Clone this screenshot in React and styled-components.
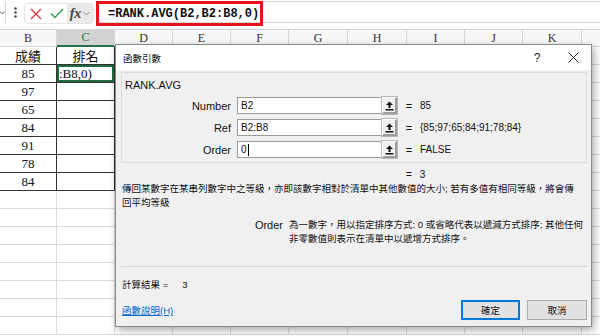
import styled, { createGlobalStyle } from "styled-components";

const GlobalStyle = createGlobalStyle`
  html, body {
    margin: 0;
    padding: 0;
    background: #ffffff;
  }
  * {
    box-sizing: border-box;
  }
`;

const Screen = styled.div`
  position: relative;
  width: 600px;
  height: 336px;
  overflow: hidden;
  background: #ffffff;
  font-family: "Liberation Sans", "Noto Sans CJK TC", sans-serif;
  display: flex;
  flex-direction: column;
`;

/* ---------- formula bar ---------- */

const FormulaBar = styled.div`
  height: 29px;
  flex: none;
  display: flex;
  align-items: flex-start;
  background: #ffffff;
`;

const NameBoxEnd = styled.div`
  width: 6px;
  height: 21px;
  margin-top: 2px;
  border-right: 1px solid #d6d6d6;
  display: flex;
  align-items: center;
`;

const Dots = styled.div`
  width: 18px;
  height: 25px;
  display: flex;
  align-items: center;
  justify-content: center;
`;

const ButtonGroup = styled.div`
  margin-top: 3px;
  height: 21px;
  width: 70px;
  border: 1px solid #e3e3e3;
  border-radius: 4px;
  display: flex;
  align-items: center;
  overflow: hidden;
`;

const IconSlot = styled.div`
  width: 21px;
  height: 100%;
  display: flex;
  align-items: center;
  justify-content: center;
`;

const FxBox = styled.div`
  flex: 1;
  height: 100%;
  background: #e9e9e9;
  display: flex;
  align-items: center;
  justify-content: center;
  gap: 2px;
  font-family: "Liberation Serif", serif;
  font-style: italic;
  font-weight: bold;
  font-size: 14px;
  color: #444;
`;

const FormulaInput = styled.div`
  flex: 1;
  margin-left: 2px;
  margin-top: 1px;
  height: 22px;
  border-top: 1px solid #d6d6d6;
  border-bottom: 1px solid #d6d6d6;
  position: relative;
`;

const Highlight = styled.div`
  position: absolute;
  left: 0;
  top: -1px;
  width: 167px;
  height: 25px;
  border: 3px solid #e8141b;
  display: flex;
  align-items: center;
  padding-left: 9px;
  font-family: "Liberation Mono", monospace;
  font-weight: bold;
  font-size: 12px;
  color: #111;
`;

/* ---------- sheet ---------- */

const columns = [
  { id: "B", w: 57 },
  { id: "C", w: 58 },
  { id: "D", w: 58 },
  { id: "E", w: 58 },
  { id: "F", w: 58 },
  { id: "G", w: 59 },
  { id: "H", w: 59 },
  { id: "I", w: 58 },
  { id: "J", w: 58 },
  { id: "K", w: 59 },
  { id: "L", w: 40 },
];

const Sheet = styled.div`
  flex: 1;
  display: grid;
  grid-template-columns: ${columns.map((c) => c.w + "px").join(" ")};
  grid-auto-rows: 18px;
  grid-template-rows: 17px;
  border-top: 1px solid #d4d4d4;
`;

const HeaderCell = styled.div`
  background: ${(p) => (p.$active ? "#d3d3d3" : "#f8f8f8")};
  border-right: 1px solid #d8d8d8;
  border-bottom: ${(p) => (p.$active ? "2px solid #217346" : "1px solid #d8d8d8")};
  color: ${(p) => (p.$active ? "#217346" : "#333")};
  font-family: "Liberation Serif", serif;
  font-size: 12px;
  display: flex;
  align-items: center;
  justify-content: center;
`;

const Cell = styled.div`
  border-right: 1px solid ${(p) => (p.$table ? "#333" : "#dcdcdc")};
  border-bottom: 1px solid ${(p) => (p.$table ? "#333" : "#dcdcdc")};
  font-family: "Liberation Serif", "Noto Sans CJK TC", serif;
  font-size: 13px;
  color: #111;
  display: flex;
  align-items: center;
  justify-content: ${(p) => (p.$left ? "flex-start" : "center")};
  padding-left: ${(p) => (p.$left ? "2px" : "0")};
  overflow: hidden;
  white-space: nowrap;
  ${(p) => p.$selected && "box-shadow: inset 0 0 0 2px #1e6b40;"}
`;

const sheetRows = [
  ["成績", "排名"],
  ["85", ":B8,0)"],
  ["97", ""],
  ["65", ""],
  ["84", ""],
  ["91", ""],
  ["78", ""],
  ["84", ""],
  ...Array.from({ length: 8 }, () => ["", ""]),
];

/* ---------- dialog ---------- */

const Dialog = styled.div`
  position: absolute;
  left: 115px;
  top: 44px;
  width: 477px;
  height: 283px;
  background: #f0f0f0;
  border: 1px solid #8a8a8a;
  box-shadow: 2px 3px 8px rgba(0, 0, 0, 0.35);
  display: flex;
  flex-direction: column;
`;

const TitleBar = styled.div`
  height: 25px;
  flex: none;
  background: #ffffff;
  display: flex;
  align-items: center;
  padding-left: 7px;
  font-size: 9.5px;
  color: #111;
`;

const TitleText = styled.div`
  flex: 1;
`;

const TitleButton = styled.div`
  width: 36px;
  height: 100%;
  display: flex;
  align-items: center;
  justify-content: center;
  font-size: 12px;
  color: #222;
`;

const Body = styled.div`
  flex: 1;
  padding: 2px 4px 0 5px;
  display: flex;
  flex-direction: column;
`;

const GroupBox = styled.div`
  height: 91px;
  border: 1px solid #dcdcdc;
  padding: 5px 0 0 3px;
  display: flex;
  flex-direction: column;
`;

const GroupTitle = styled.div`
  font-size: 11px;
  line-height: 14px;
  color: #111;
`;

const ArgGrid = styled.div`
  margin-top: 5px;
  display: grid;
  grid-template-columns: 112px 145px 15px 23px 1fr;
  grid-auto-rows: 17px;
  row-gap: 5px;
  align-items: center;
`;

const ArgLabel = styled.div`
  font-size: 11px;
  color: #111;
  text-align: right;
  padding-right: 6px;
`;

const ArgInput = styled.div`
  height: 17px;
  background: #ffffff;
  border: 1px solid #9a9a9a;
  border-right: none;
  font-size: 10px;
  color: #111;
  display: flex;
  align-items: center;
  padding-left: 3px;
`;

const Caret = styled.span`
  display: inline-block;
  width: 1px;
  height: 12px;
  background: #000;
  margin-left: 1px;
`;

const CollapseButton = styled.div`
  height: 17px;
  background: #f0f0f0;
  border: 1px solid #9a9a9a;
  border-top-color: #ffffff;
  border-left-color: #ffffff;
  box-shadow: inset -1px -1px 0 #a0a0a0;
  outline: 1px solid #b8b8b8;
  display: flex;
  align-items: center;
  justify-content: center;
`;

const Equals = styled.div`
  font-size: 11px;
  color: #111;
  text-align: center;
  padding-left: 1px;
`;

const ArgValue = styled.div`
  font-size: 10px;
  color: #111;
  white-space: nowrap;
`;

const ResultLine = styled.div`
  margin-top: 4px;
  height: 14px;
  display: flex;
  align-items: center;
  padding-left: 285px;
  font-size: 10px;
  color: #111;
  gap: 8px;
`;

const Description = styled.div`
  margin-top: 1px;
  padding-left: 1px;
  font-size: 9.5px;
  line-height: 14px;
  color: #111;
  white-space: nowrap;
`;

const ArgHelp = styled.div`
  margin-top: 8px;
  display: flex;
  font-size: 9.5px;
  line-height: 14px;
  color: #111;
`;

const ArgHelpName = styled.div`
  width: 168px;
  text-align: right;
  padding-right: 6px;
  font-size: 11px;
`;

const ArgHelpText = styled.div`
  white-space: nowrap;
`;

const Separator = styled.div`
  margin-top: 20px;
  height: 1px;
  background: #d5d5d5;
`;

const Computed = styled.div`
  margin-top: 10px;
  height: 14px;
  display: flex;
  align-items: center;
  font-size: 9.5px;
  color: #111;
  gap: 14px;
  padding-left: 1px;
`;

const Footer = styled.div`
  margin-top: 9px;
  display: flex;
  align-items: center;
  gap: 7px;
`;

const HelpLink = styled.a`
  flex: 1;
  font-size: 9.5px;
  color: #0066cc;
  text-decoration: underline;
  padding-left: 1px;
`;

const DialogButton = styled.div`
  width: ${(p) => (p.$default ? "59px" : "60px")};
  height: 20px;
  background: #e1e1e1;
  border: ${(p) => (p.$default ? "2px solid #0078d7" : "1px solid #adadad")};
  display: flex;
  align-items: center;
  justify-content: center;
  font-size: 9.5px;
  color: #111;
`;

function CollapseIcon() {
  return (
    <svg width="9" height="10" viewBox="0 0 9 10">
      <path d="M4.5 0.5 L8 4 L5.5 4 L5.5 7 L3.5 7 L3.5 4 L1 4 Z" fill="#111" />
      <rect x="0.5" y="8" width="8" height="1.5" fill="#111" />
    </svg>
  );
}

function ArgRow({ label, value, result, caret }) {
  return (
    <>
      <ArgLabel>{label}</ArgLabel>
      <ArgInput>
        {value}
        {caret && <Caret />}
      </ArgInput>
      <CollapseButton>
        <CollapseIcon />
      </CollapseButton>
      <Equals>=</Equals>
      <ArgValue>{result}</ArgValue>
    </>
  );
}

export default function App() {
  return (
    <>
      <GlobalStyle />
      <Screen>
        <FormulaBar>
          <NameBoxEnd>
            <svg width="5" height="6" viewBox="0 0 5 6">
              <path d="M0 1.5 L2.5 4 L5 1.5" stroke="#555" fill="none" strokeWidth="1" />
            </svg>
          </NameBoxEnd>
          <Dots>
            <svg width="3" height="11" viewBox="0 0 3 11">
              <circle cx="1.5" cy="1.5" r="1.2" fill="#444" />
              <circle cx="1.5" cy="5.5" r="1.2" fill="#444" />
              <circle cx="1.5" cy="9.5" r="1.2" fill="#444" />
            </svg>
          </Dots>
          <ButtonGroup>
            <IconSlot>
              <svg width="12" height="12" viewBox="0 0 12 12">
                <path d="M1 1 L11 11 M11 1 L1 11" stroke="#e0393e" strokeWidth="1.3" />
              </svg>
            </IconSlot>
            <IconSlot>
              <svg width="14" height="11" viewBox="0 0 14 11">
                <path d="M1 5.5 L5 9.5 L13 1" stroke="#2f9e4f" strokeWidth="1.4" fill="none" />
              </svg>
            </IconSlot>
            <FxBox>
              fx
              <svg width="7" height="5" viewBox="0 0 7 5">
                <path d="M0.5 1 L3.5 4 L6.5 1" stroke="#888" fill="none" strokeWidth="1" />
              </svg>
            </FxBox>
          </ButtonGroup>
          <FormulaInput>
            <Highlight>=RANK.AVG(B2,B2:B8,0)</Highlight>
          </FormulaInput>
        </FormulaBar>

        <Sheet>
          {columns.map((c) => (
            <HeaderCell key={c.id} $active={c.id === "C"}>
              {c.id === "L" ? "" : c.id}
            </HeaderCell>
          ))}
          {sheetRows.map((row, r) =>
            columns.map((c, i) => {
              const inTable = i < 2 && r < 8;
              const text = i < 2 ? row[i] : "";
              return (
                <Cell
                  key={c.id + r}
                  $table={inTable}
                  $left={i === 1 && r === 1}
                  $selected={i === 1 && r === 1}
                >
                  {text}
                </Cell>
              );
            })
          )}
        </Sheet>

        <Dialog>
          <TitleBar>
            <TitleText>函數引數</TitleText>
            <TitleButton>?</TitleButton>
            <TitleButton>
              <svg width="11" height="11" viewBox="0 0 11 11">
                <path d="M0.5 0.5 L10.5 10.5 M10.5 0.5 L0.5 10.5" stroke="#222" strokeWidth="1" />
              </svg>
            </TitleButton>
          </TitleBar>
          <Body>
            <GroupBox>
              <GroupTitle>RANK.AVG</GroupTitle>
              <ArgGrid>
                <ArgRow label="Number" value="B2" result="85" />
                <ArgRow label="Ref" value="B2:B8" result="{85;97;65;84;91;78;84}" />
                <ArgRow label="Order" value="0" result="FALSE" caret />
              </ArgGrid>
            </GroupBox>
            <ResultLine>
              <span>=</span>
              <span>3</span>
            </ResultLine>
            <Description>
              傳回某數字在某串列數字中之等級，亦即該數字相對於清單中其他數值的大小; 若有多值有相同等級，將會傳
              <br />
              回平均等級
            </Description>
            <ArgHelp>
              <ArgHelpName>Order</ArgHelpName>
              <ArgHelpText>
                為一數字，用以指定排序方式: 0 或省略代表以遞減方式排序; 其他任何
                <br />
                非零數值則表示在清單中以遞增方式排序。
              </ArgHelpText>
            </ArgHelp>
            <Separator />
            <Computed>
              <span>計算結果 =</span>
              <span>3</span>
            </Computed>
            <Footer>
              <HelpLink>函數說明(H)</HelpLink>
              <DialogButton $default>確定</DialogButton>
              <DialogButton>取消</DialogButton>
            </Footer>
          </Body>
        </Dialog>
      </Screen>
    </>
  );
}
